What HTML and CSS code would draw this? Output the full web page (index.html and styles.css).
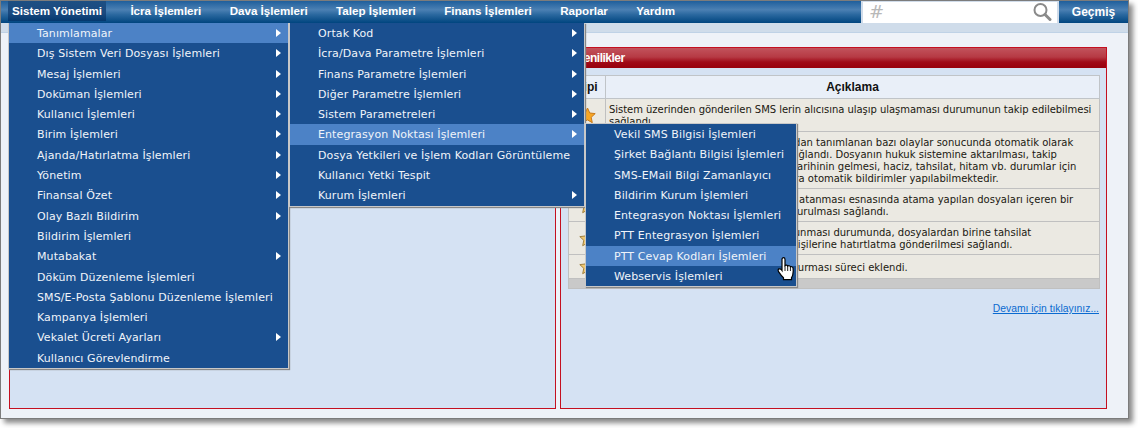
FILE: index.html
```html
<!DOCTYPE html>
<html lang="tr">
<head>
<meta charset="utf-8">
<title>Sistem Yönetimi</title>
<link rel="stylesheet" href="styles.css">
</head>
<body>
<div class="window">
  <nav class="topbar">
    <a class="nav-item active">Sistem Yönetimi</a>
    <a class="nav-item">İcra İşlemleri</a>
    <a class="nav-item">Dava İşlemleri</a>
    <a class="nav-item">Talep İşlemleri</a>
    <a class="nav-item">Finans İşlemleri</a>
    <a class="nav-item">Raporlar</a>
    <a class="nav-item">Yardım</a>
    <div class="search">
      <span class="hash">#</span>
      <svg class="lens" width="20" height="20" viewBox="0 0 20 20"><circle cx="8.5" cy="8" r="6" fill="none" stroke="#8a8a8a" stroke-width="2"/><path d="M13 12.5l5 5" stroke="#8a8a8a" stroke-width="3" stroke-linecap="round"/></svg>
    </div>
    <a class="history">Geçmiş</a>
  </nav>
  <div class="band"></div>
  <main class="content">
    <section class="panel"></section>
    <section class="panel">
      <h2 class="panel-head">Yenilikler</h2>
      <div class="panel-body">
        <table class="news">
          <thead>
            <tr><th class="col-type">Tipi</th><th>Açıklama</th></tr>
          </thead>
          <tbody>
            <tr class="r1">
              <td class="col-type"><svg class="star" width="17" height="17" viewBox="0 0 17 17"><path d="M8.5 1l2.3 5 5.4.6-4 3.7 1.1 5.4-4.8-2.8-4.8 2.8 1.1-5.4-4-3.7 5.4-.6z" fill="#f7a623" stroke="#c8791a"/></svg></td>
              <td>Sistem üzerinden gönderilen SMS lerin alıcısına ulaşıp ulaşmaması durumunun takip edilebilmesi<br>sağlandı.</td>
            </tr>
            <tr class="r2">
              <td class="col-type"><svg class="star" width="17" height="17" viewBox="0 0 17 17"><path d="M8.5 1l2.3 5 5.4.6-4 3.7 1.1 5.4-4.8-2.8-4.8 2.8 1.1-5.4-4-3.7 5.4-.6z" fill="#f7a623" stroke="#c8791a"/></svg></td>
              <td>Sistem içerisinde &nbsp;&nbsp;kullanıcılar tarafından tanımlanan bazı olaylar sonucunda otomatik olarak<br>bildirimlerin yapılması için alt yapı &nbsp;sağlandı. Dosyanın hukuk sistemine aktarılması, takip<br>takip işleminin yapılması, &nbsp;&nbsp;duruşma tarihinin gelmesi, haciz, tahsilat, hitam vb. durumlar için<br>gerekli tüm kullanıcılara ve kişilere sıra otomatik bildirimler yapılabilmektedir.</td>
            </tr>
            <tr class="r3">
              <td class="col-type"><svg class="star muted" width="17" height="17" viewBox="0 0 17 17"><path d="M8.5 1l2.3 5 5.4.6-4 3.7 1.1 5.4-4.8-2.8-4.8 2.8 1.1-5.4-4-3.7 5.4-.6z" fill="#f0c870" stroke="#a08040"/></svg></td>
              <td>İcra dosyalarının avukatlara otomatik atanması esnasında atama yapılan dosyaları içeren bir<br>Atama listesi için yeni bir &nbsp;evrak oluşturulması sağlandı.</td>
            </tr>
            <tr class="r4">
              <td class="col-type"><svg class="star muted" width="17" height="17" viewBox="0 0 17 17"><path d="M8.5 1l2.3 5 5.4.6-4 3.7 1.1 5.4-4.8-2.8-4.8 2.8 1.1-5.4-4-3.7 5.4-.6z" fill="#f0c870" stroke="#a08040"/></svg></td>
              <td>Dosyalarda vekalet ücretleri borç bulunması durumunda, dosyalardan birine tahsilat<br>tahsilat yapılması için ilgili olan tüm kişilerine hatırtlatma gönderilmesi sağlandı.</td>
            </tr>
            <tr class="r5">
              <td class="col-type"><svg class="star muted" width="17" height="17" viewBox="0 0 17 17"><path d="M8.5 1l2.3 5 5.4.6-4 3.7 1.1 5.4-4.8-2.8-4.8 2.8 1.1-5.4-4-3.7 5.4-.6z" fill="#f0c870" stroke="#a08040"/></svg></td>
              <td>Sistem üzerinden toplu ilk takibi oluşturması süreci eklendi.</td>
            </tr>
          </tbody>
          <tfoot><tr><td colspan="2"></td></tr></tfoot>
        </table>
        <div class="more"><a href="#">Devamı için tıklayınız...</a></div>
      </div>
    </section>
  </main>

  <ul class="menu menu-1">
    <li class="on arrow">Tanımlamalar</li>
    <li class="arrow">Dış Sistem Veri Dosyası İşlemleri</li>
    <li class="arrow">Mesaj İşlemleri</li>
    <li class="arrow">Doküman İşlemleri</li>
    <li class="arrow">Kullanıcı İşlemleri</li>
    <li class="arrow">Birim İşlemleri</li>
    <li class="arrow">Ajanda/Hatırlatma İşlemleri</li>
    <li class="arrow">Yönetim</li>
    <li class="arrow">Finansal Özet</li>
    <li class="arrow">Olay Bazlı Bildirim</li>
    <li>Bildirim İşlemleri</li>
    <li class="arrow">Mutabakat</li>
    <li>Döküm Düzenleme İşlemleri</li>
    <li>SMS/E-Posta Şablonu Düzenleme İşlemleri</li>
    <li>Kampanya İşlemleri</li>
    <li class="arrow">Vekalet Ücreti Ayarları</li>
    <li>Kullanıcı Görevlendirme</li>
  </ul>
  <ul class="menu menu-2">
    <li class="arrow">Ortak Kod</li>
    <li class="arrow">İcra/Dava Parametre İşlemleri</li>
    <li class="arrow">Finans Parametre İşlemleri</li>
    <li class="arrow">Diğer Parametre İşlemleri</li>
    <li class="arrow">Sistem Parametreleri</li>
    <li class="on arrow">Entegrasyon Noktası İşlemleri</li>
    <li>Dosya Yetkileri ve İşlem Kodları Görüntüleme</li>
    <li>Kullanıcı Yetki Tespit</li>
    <li class="arrow">Kurum İşlemleri</li>
  </ul>
  <ul class="menu menu-3">
    <li>Vekil SMS Bilgisi İşlemleri</li>
    <li>Şirket Bağlantı Bilgisi İşlemleri</li>
    <li>SMS-EMail Bilgi Zamanlayıcı</li>
    <li>Bildirim Kurum İşlemleri</li>
    <li>Entegrasyon Noktası İşlemleri</li>
    <li>PTT Entegrasyon İşlemleri</li>
    <li class="on">PTT Cevap Kodları İşlemleri</li>
    <li>Webservis İşlemleri</li>
  </ul>
  <svg class="cursor" width="19" height="24" viewBox="0 0 19 24"><path d="M5 10.500V2.500C5 1.300 5.700.700 6.500.700S8 1.300 8 2.500V8.500c.8-.7 2.400-.6 2.700.5.800-.6 2.400-.4 2.700.7.800-.4 2.300 0 2.600 1.300.2 1 .2 4.500-.2 6.500-.2 1.300-.7 2.300-1.300 3.200v2H6.500v-2C5 19.500 3.500 17.500 1.700 14.800.800 13.500 1 12.300 2 11.900c1.100-.4 2.200.4 3 1.600z" fill="#fff" stroke="#000" stroke-width="1.200"/><path d="M8 8.500V14M10.700 9V14M13.400 9.700V14" stroke="#000" stroke-width=".9"/></svg>
</div>
</body>
</html>
```

FILE: styles.css
```css
* { box-sizing: border-box; }
html, body { margin: 0; padding: 0; background: #fff; }
body { width: 1138px; height: 428px; overflow: hidden; }

.window {
  position: relative;
  width: 1129px;
  height: 419px;
  background: #eef2f8;
  border: 1px solid #7c7c7c;
  box-shadow: 4px 4px 5px #8a8a8a;
  font-family: "DejaVu Sans", Verdana, sans-serif;
}

.topbar {
  display: flex;
  align-items: flex-start;
  height: 22px;
  background: linear-gradient(#1f5f9c, #4b80b3 40%, #2a689f 62%, #00457f);
  padding-left: 7px;
}
.nav-item {
  font: bold 11.600px/20px "Liberation Sans", Arial, sans-serif;
  color: #fff;
  padding: 0 4px;
  margin-right: 20.400px;
  white-space: nowrap;
}
.nav-item.active {
  background: linear-gradient(#1d4f83, #1a4a80 60%, #04386e);
  height: 20px;
}
.search {
  display: flex;
  align-items: center;
  justify-content: space-between;
  width: 198px;
  height: 22px;
  margin-left: auto;
  padding: 0 5px 2px 6px;
  background: #fff;
  border: 1px solid #d0dcea;
  border-width: 1px 2px 0;
}
.hash {
  font: italic 18px/20px "DejaVu Sans", sans-serif;
  color: #b8b8b8;
}
.history {
  width: 69px;
  font: bold 12px/22px "Liberation Sans", Arial, sans-serif;
  color: #fff;
  text-align: center;
}

.band {
  height: 10px;
  background: #cfdcea;
  border-bottom: 1px solid #bfd2e6;
}

.content {
  display: flex;
  gap: 4px;
  height: 385px;
  padding: 14px 20px 9px 8px;
}
.panel {
  display: flex;
  flex-direction: column;
  width: 547px;
  background: #d5e2f3;
  border: 1px solid #c41020;
}
.panel-head {
  margin: 0;
  height: 20px;
  padding-left: 16px;
  font: bold 12px/20px "Liberation Sans", Arial, sans-serif;
  letter-spacing: -.5px;
  color: #fff;
  background: linear-gradient(#c2535c, #b63a44 45%, #a00a18 70%, #98000c);
}
.panel-body { padding: 7px 7px 0; }

.news {
  table-layout: fixed;
  width: 532px;
  border-collapse: collapse;
  font-size: 10px;
  line-height: 12px;
  color: #201810;
}
.news th {
  height: 23px;
  padding: 0;
  background: #e9eff8;
  border: 1px solid #c0c4c8;
  font: bold 12px "Liberation Sans", Arial, sans-serif;
  color: #111;
}
.news td {
  padding: 2px 3px 0;
  background: #ebe9e2;
  border: 1px solid #c0c0c0;
  white-space: nowrap;
  overflow: hidden;
}
.col-type { width: 37px; text-align: center; }
.news td.col-type { padding: 0; }
.r1 td { height: 33px; letter-spacing: -.04px; }
.r2 td { height: 57px; }
.r3 td { height: 33px; }
.r4 td { height: 33px; }
.r5 td { height: 24px; }
.news tfoot td { height: 10px; padding: 0; background: #c9c9c9; }
.star { display: block; margin: 0 auto; }

.more { margin-top: 12px; text-align: right; font: 10.340px/16px "Liberation Sans", Arial, sans-serif; }
.more a { color: #0a6ad0; }

.menu {
  position: absolute;
  margin: 0;
  padding: 0;
  list-style: none;
  background: #1a4f8f;
  border: 1px solid #c8c8c8;
  border-top-width: 0;
  box-shadow: 1px 1px 1px #888;
  font-size: 11px;
  letter-spacing: .1px;
  color: #f0f4fa;
}
.menu li {
  position: relative;
  height: 20.300px;
  line-height: 21px;
  padding-left: 28px;
  white-space: nowrap;
}
.menu li.on { background: #4c82c6; }
.menu li.arrow::after {
  content: "";
  position: absolute;
  right: 7px;
  top: 6px;
  border-left: 5px solid #fff;
  border-top: 4px solid transparent;
  border-bottom: 4px solid transparent;
}
.menu-1 { left: 7px; top: 22px; width: 281px; }
.menu-2 { left: 288px; top: 22px; width: 296px; }
.menu-3 { left: 584px; top: 122px; width: 212px; border-top-width: 1px; }

.cursor { position: absolute; left: 776px; top: 256px; }
```
